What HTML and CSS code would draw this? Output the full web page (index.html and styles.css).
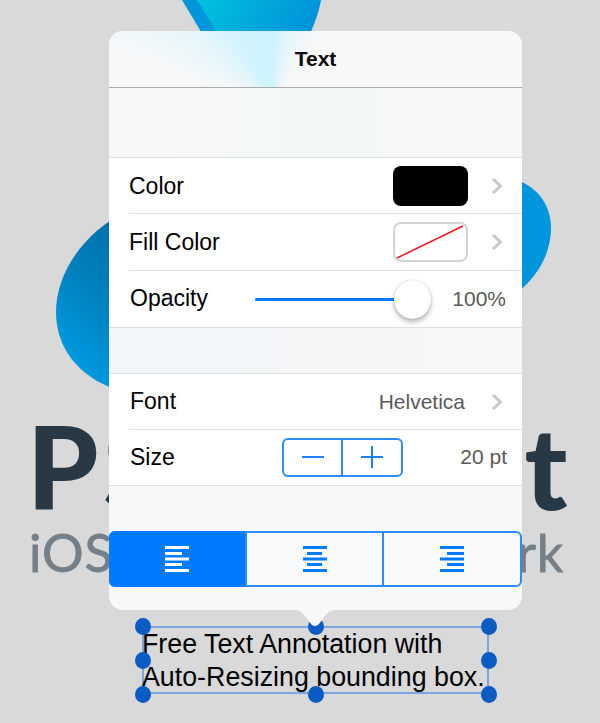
FILE: index.html
```html
<!DOCTYPE html>
<html lang="en">
<head>
<meta charset="utf-8">
<title>Text annotation inspector</title>
<link rel="stylesheet" href="styles.css">
</head>
<body>
<main class="stage">
  <svg class="logo-art" viewBox="0 0 600 723" width="600" height="723" aria-hidden="true">
    <defs>
      <linearGradient id="topFill" x1="0" y1="0" x2="1" y2="0.15">
        <stop offset="0" stop-color="#00c2dc"/>
        <stop offset="1" stop-color="#0093da"/>
      </linearGradient>
      <linearGradient id="leftFill" x1="1" y1="0" x2="0.55" y2="1">
        <stop offset="0" stop-color="#006ba3"/>
        <stop offset="0.55" stop-color="#0080bd"/>
        <stop offset="1" stop-color="#0099e0"/>
      </linearGradient>
    </defs>
    <path d="M182 0 L206 40 L300 40 L300 0 Z" fill="#0096dc"/>
    <path d="M197 0 L222 40 L307 40 C314 26 319 12 321 0 Z" fill="url(#topFill)"/>
    <path d="M125 212 C85 232 56 272 56 312 C56 352 84 382 125 392 L140 392 L140 212 Z" fill="url(#leftFill)"/>
    <path d="M510 178 C536 184 551 204 551 228 C551 252 539 275 518 292 L510 292 Z" fill="#0095dc"/>
  </svg>
  <p class="brand">PSPDFKit</p>
  <p class="tagline">iOS PDF Framework</p>

  <section class="popover">
    <header class="pop-title">Text</header>
    <div class="spacer spacer-top"></div>
    <div class="group group-a">
      <div class="row line">
        <span class="label">Color</span>
        <span class="swatch swatch-black"></span>
        <svg class="chev" viewBox="0 0 12 18" width="12" height="18" aria-hidden="true"><path d="M2 2 L9.5 9 L2 16"/></svg>
      </div>
      <div class="row line">
        <span class="label">Fill Color</span>
        <span class="swatch swatch-none">
          <svg viewBox="0 0 75 40" width="75" height="40" aria-hidden="true"><path d="M4 36 L70 4"/></svg>
        </span>
        <svg class="chev" viewBox="0 0 12 18" width="12" height="18" aria-hidden="true"><path d="M2 2 L9.5 9 L2 16"/></svg>
      </div>
      <div class="row row-indent">
        <span class="label">Opacity</span>
        <span class="slider"><span class="thumb"></span></span>
        <span class="value value-pct">100%</span>
      </div>
    </div>
    <div class="spacer spacer-mid"></div>
    <div class="group group-b">
      <div class="row row-indent line">
        <span class="label">Font</span>
        <span class="value value-font">Helvetica</span>
        <svg class="chev" viewBox="0 0 12 18" width="12" height="18" aria-hidden="true"><path d="M2 2 L9.5 9 L2 16"/></svg>
      </div>
      <div class="row row-indent">
        <span class="label">Size</span>
        <span class="stepper">
          <span class="step"><svg viewBox="0 0 24 24" width="24" height="24" aria-hidden="true"><path d="M1 12 H23"/></svg></span>
          <span class="step"><svg viewBox="0 0 24 24" width="24" height="24" aria-hidden="true"><path d="M1 12 H23 M12 1 V23"/></svg></span>
        </span>
        <span class="value value-pt">20 pt</span>
      </div>
    </div>
    <div class="spacer spacer-low"></div>
    <div class="segments">
      <span class="seg seg-on">
        <svg viewBox="0 0 24 26" width="24" height="26" aria-hidden="true"><path d="M0 1.5 H24 M0 7.5 H17 M0 13 H24 M0 18.5 H17 M0 24.5 H24"/></svg>
      </span>
      <span class="seg">
        <svg viewBox="0 0 24 26" width="24" height="26" aria-hidden="true"><path d="M0 1.5 H24 M4 7.5 H19 M0 13 H24 M4 18.5 H19 M0 24.5 H24"/></svg>
      </span>
      <span class="seg">
        <svg viewBox="0 0 24 26" width="24" height="26" aria-hidden="true"><path d="M0 1.5 H24 M7 7.5 H24 M0 13 H24 M7 18.5 H24 M0 24.5 H24"/></svg>
      </span>
    </div>
    <svg class="pop-arrow" viewBox="0 0 44 17" width="44" height="17" aria-hidden="true"><path d="M0 0 C6 0 9 2 12 6 L18 14 C20 16.5 24 16.5 26 14 L32 6 C35 2 38 0 44 0 Z"/></svg>
  </section>

  <div class="annotation">
    <p class="annotation-text">Free Text Annotation with<br>Auto-Resizing bounding box.</p>
    <i class="handle h-tl"></i><i class="handle h-tc"></i><i class="handle h-tr"></i>
    <i class="handle h-ml"></i><i class="handle h-mr"></i>
    <i class="handle h-bl"></i><i class="handle h-bc"></i><i class="handle h-br"></i>
  </div>
</main>
</body>
</html>
```
FILE: styles.css
```css
* { box-sizing: border-box; }
html, body { margin: 0; padding: 0; }
body { background: #d9d9d9; font-family: "Liberation Sans", Arial, sans-serif; }

.stage { position: relative; width: 600px; height: 723px; overflow: hidden; background: #d9d9d9; }

.logo-art { position: absolute; left: 0; top: 0; }
.brand, .tagline { position: absolute; margin: 0; font-family: Lato, sans-serif; white-space: nowrap; }
.brand { left: 27px; top: 399px; font-size: 114px; line-height: 134px; font-weight: 900; color: #293845; letter-spacing: 4.5px; }
.tagline { left: 29px; top: 517px; font-size: 52px; line-height: 70px; font-weight: 400; color: #757f87; word-spacing: 27px; letter-spacing: 1px; -webkit-text-stroke: 0.8px #757f87; }

.popover { position: absolute; left: 109px; top: 31px; width: 413px; height: 579px; border-radius: 14px; background: #f8f8f9; display: flex; flex-direction: column; z-index: 2; }

.pop-title { height: 57px; flex: none; padding-top: 15px; border-bottom: 1px solid #a9abab; border-radius: 14px 14px 0 0; text-align: center; font-size: 21px; line-height: 26px; font-weight: 700; color: #0b0b0b; background-color: #f8f8f8; background-image: conic-gradient(from 285deg at 163px 71px, rgba(248,248,248,0) 0deg, #e6f6fb 25deg, #d4f3fd 45deg, #ccf3ff 62deg, #d0f3fe 78deg, #e6f6fb 90deg, rgba(248,248,248,0) 112deg, rgba(248,248,248,0) 360deg); }

.spacer { flex: none; }
.spacer-top { height: 69px; background: linear-gradient(90deg, #f8f8f8 0%, #f3f7f8 45%, #f6f7f7 100%); }
.spacer-mid { height: 45px; background: linear-gradient(90deg, #f0f6f9 0%, #f4f6f7 50%, #f6f7f7 100%); }
.spacer-low { height: 45px; background: #f7f8f8; }

.group { flex: none; background: #fff; border-top: 1px solid #dfdfdf; border-bottom: 1px solid #dfdfdf; }
.group-a { height: 171px; }
.group-b { height: 113px; }

.row { position: relative; height: 56.33px; display: flex; align-items: center; padding: 0 19px 0 20px; font-size: 23px; color: #000; }
.group-b .row { height: 55.5px; }
.row-indent { padding-left: 21px; }
.line::after { content: ""; position: absolute; left: 20px; right: 0; bottom: 0; height: 1px; background: #dfdfdf; }
.label { flex: 1; }

.swatch { width: 75px; height: 40px; border-radius: 8px; margin-right: 23px; }
.swatch-black { background: #000; }
.swatch-none { background: #fff; border: 2px solid #d4d4d4; overflow: hidden; }
.swatch-none svg { display: block; margin: -2px; }
.swatch-none path { stroke: #f0141e; stroke-width: 1.5; fill: none; }

.chev { flex: none; }
.chev path { stroke: #c7c7cc; stroke-width: 3; fill: none; }

.value { color: #5a5a5a; font-size: 21px; }
.value-font { margin-right: 26px; }
.value-pct { width: 76px; text-align: right; margin-right: -3px; }
.value-pt { width: 104px; text-align: right; margin-right: -4px; }

.slider { position: absolute; left: 146px; top: 27px; width: 160px; height: 3px; background: #007aff; border-radius: 2px; }
.thumb { position: absolute; right: -16px; top: -18px; width: 37px; height: 39px; border-radius: 50%; background: #fff; box-shadow: 0 3px 5px rgba(0,0,0,.3), 0 0 1px rgba(0,0,0,.25); }

.stepper { position: absolute; left: 173px; top: 8px; width: 121px; height: 39px; display: flex; border: 2px solid #2a8cff; border-radius: 6px; }
.step { flex: 1; display: flex; align-items: center; justify-content: center; }
.step + .step { margin-left: -1px; border-left: 2px solid #2a8cff; }
.step path { stroke: #1a84ff; stroke-width: 2; fill: none; }

.segments { flex: none; height: 56px; display: flex; border: 2px solid #2a8cff; border-radius: 6px; background: #f8f9fb; }
.seg { flex: 1; display: flex; align-items: center; justify-content: center; }
.seg + .seg { border-left: 2px solid #2a8cff; }
.seg svg { display: block; }
.seg path { stroke: #007aff; stroke-width: 3; fill: none; }
.seg-on { background: #007aff; margin: -2px 0 -2px -2px; border-radius: 6px 0 0 6px; }
.seg-on path { stroke: #fff; }

.pop-arrow { position: absolute; left: 184px; top: 579px; }
.pop-arrow path { fill: #f8f8f9; }

.annotation { position: absolute; left: 142px; top: 626px; width: 347px; height: 68px; border: 2px solid #7aa6e2; z-index: 1; }
.annotation-text { margin: 0 0 0 -2px; font-size: 26.8px; line-height: 33px; color: #000; white-space: nowrap; }
.handle { position: absolute; width: 16px; height: 17px; border-radius: 50%; background: #0a5bc4; }
.h-tl, .h-ml, .h-bl { left: -9px; }
.h-tc, .h-bc { left: 164px; }
.h-tr, .h-mr, .h-br { right: -10px; }
.h-tl, .h-tc, .h-tr { top: -10px; }
.h-ml, .h-mr { top: 24px; }
.h-bl, .h-bc, .h-br { bottom: -11px; }
```
